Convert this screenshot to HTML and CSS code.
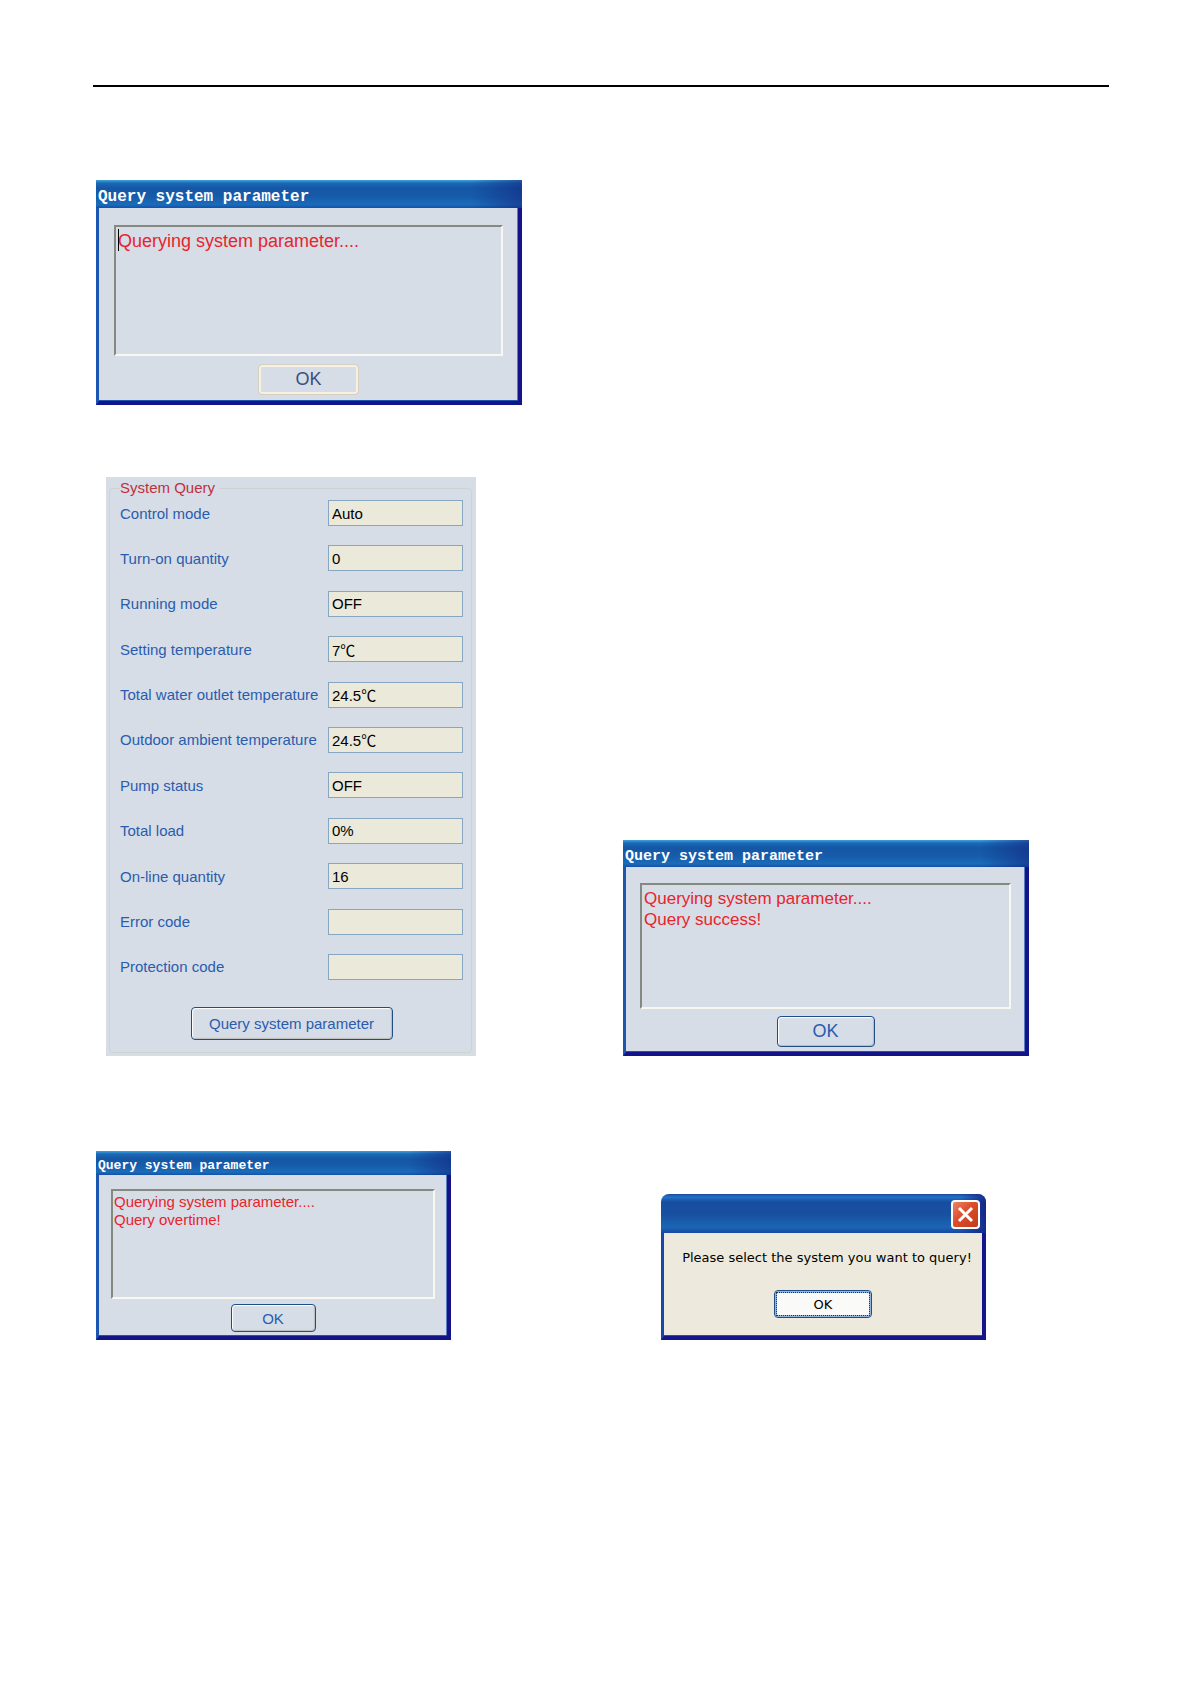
FILE: index.html
```html
<!DOCTYPE html>
<html lang="en">
<head>
  <meta charset="UTF-8">
  <title>Query system parameter</title>
  <link rel="stylesheet" href="styles.css">
</head>
<body>
  <hr class="page-rule">

  <main>
    <!-- query in progress -->
    <div class="row row-first">
      <section class="dialog dialog-large">
        <h2 class="title">Query system parameter</h2>
        <div class="dialog-body">
          <div class="log-wrap caret">
            <textarea class="log" aria-label="Query log" spellcheck="false" readonly>Querying system parameter....</textarea>
          </div>
          <button class="btn btn-hot">OK</button>
        </div>
      </section>
    </div>

    <!-- result panel and success message -->
    <div class="row row-panel">
      <form class="panel">
        <fieldset class="group">
          <legend>System Query</legend>
          <div class="fields">
            <div class="field"><label for="control">Control mode</label><input id="control" type="text" value="Auto" readonly></div>
            <div class="field"><label for="turnon">Turn-on quantity</label><input id="turnon" type="text" value="0" readonly></div>
            <div class="field"><label for="running">Running mode</label><input id="running" type="text" value="OFF" readonly></div>
            <div class="field"><label for="setting">Setting temperature</label><input id="setting" type="text" value="7℃" readonly></div>
            <div class="field"><label for="outlet">Total water outlet temperature</label><input id="outlet" type="text" value="24.5℃" readonly></div>
            <div class="field"><label for="ambient">Outdoor ambient temperature</label><input id="ambient" type="text" value="24.5℃" readonly></div>
            <div class="field"><label for="pump">Pump status</label><input id="pump" type="text" value="OFF" readonly></div>
            <div class="field"><label for="load">Total load</label><input id="load" type="text" value="0%" readonly></div>
            <div class="field"><label for="online">On-line quantity</label><input id="online" type="text" value="16" readonly></div>
            <div class="field"><label for="error">Error code</label><input id="error" type="text" value="" readonly></div>
            <div class="field"><label for="protection">Protection code</label><input id="protection" type="text" value="" readonly></div>
          </div>
          <button class="btn btn-query" type="button">Query system parameter</button>
        </fieldset>
      </form>

      <section class="dialog dialog-medium">
        <h2 class="title">Query system parameter</h2>
        <div class="dialog-body">
          <div class="log-wrap">
            <textarea class="log" aria-label="Query log" spellcheck="false" readonly>Querying system parameter....
Query success!</textarea>
          </div>
          <button class="btn">OK</button>
        </div>
      </section>
    </div>

    <!-- timeout and missing selection -->
    <div class="row row-last">
      <section class="dialog dialog-small">
        <h2 class="title">Query system parameter</h2>
        <div class="dialog-body">
          <div class="log-wrap">
            <textarea class="log" aria-label="Query log" spellcheck="false" readonly>Querying system parameter....
Query overtime!</textarea>
          </div>
          <button class="btn">OK</button>
        </div>
      </section>

      <section class="alert">
        <div class="alert-title">
          <button class="close" aria-label="Close">
            <svg width="19" height="19" viewBox="0 0 19 19">
              <path d="M3 3L16 16M16 3L3 16" stroke="#fff" stroke-width="3" fill="none"/>
            </svg>
          </button>
        </div>
        <div class="alert-body">
          <p>Please select the system you want to query!</p>
          <button class="alert-ok"><span>OK</span></button>
        </div>
      </section>
    </div>
  </main>
</body>
</html>
```
FILE: styles.css
```css
* {
  box-sizing: border-box;
}
body {
  margin: 0;
  padding: 85px 82px 0 93px;
  background-color: #fff;
  font-family: "Liberation Sans", Arial, "Noto Sans CJK SC", sans-serif;
}
.page-rule {
  margin: 0;
  border: none;
  height: 2px;
  background-color: #000;
}

/* rows of windows */
.row {
  display: grid;
  grid-template-columns: 530fr 486fr;
  align-items: end;
}
.row-first {
  margin-top: 93px;
}
.row-panel {
  margin-top: 72px;
}
.row-last {
  margin-top: 95px;
}

/* query dialogs */
.dialog {
  --pad: 14px;
  --line: 21px;
  background: linear-gradient(to right, #1c56ae, #14148a);
}
.dialog-large {
  width: 426px;
  margin-left: 3px;
  --pad: 15px;
  --line: 22px;
  --title: 28px;
  --log: 131px;
  font-size: 18px;
}
.dialog-medium {
  width: 406px;
  --title: 27px;
  --log: 126px;
  font-size: 17px;
}
.dialog-small {
  width: 355px;
  margin-left: 3px;
  --pad: 12px;
  --line: 18px;
  --title: 24px;
  --log: 110px;
  font-size: 15px;
}
.title {
  margin: 0;
  height: var(--title);
  padding: 6px 2px 0;
  overflow: hidden;
  line-height: calc(var(--title) - 6px);
  color: #fff;
  font-family: "Liberation Mono", monospace;
  font-weight: bold;
  font-size: 15px;
  background:
    linear-gradient(to right, rgba(20, 40, 140, 0) 88%, rgba(20, 40, 130, 0.6)),
    linear-gradient(#3fa5d8 0, #1c69b8 3px, #1457a4 8px, #165cab 60%, #1a6cba 88%, #1450a8);
}
.dialog-large .title {
  font-size: 16px;
}
.dialog-small .title {
  font-size: 13px;
}
.dialog-body {
  display: flex;
  flex-direction: column;
  align-items: center;
  gap: 8px;
  padding: calc(var(--pad) + 2px) var(--pad) 6px;
  border: solid #14148a;
  border-width: 0 4px 4px 3px;
  border-left-color: #1c56ae;
  background-color: #d6dde6;
  box-shadow: inset 0 -1px #1c56ae, inset -1px 0 #5c7fc4;
}
.dialog-medium .dialog-body {
  gap: 7px;
  padding-bottom: 5px;
}
.dialog-small .dialog-body {
  gap: 5px;
  padding-bottom: 4px;
}
.log-wrap {
  position: relative;
  width: 100%;
  height: var(--log);
}
.log {
  display: block;
  width: 100%;
  height: 100%;
  padding: 3px 2px;
  border: 2px solid;
  border-color: #85897f #f8f8f0 #f8f8f0 #85897f;
  outline: none;
  resize: none;
  overflow: hidden;
  background-color: transparent;
  color: #e8242c;
  font-family: inherit;
  font-size: inherit;
  line-height: var(--line);
}
.dialog-small .log {
  padding: 2px 1px;
}
.caret::before {
  content: "";
  position: absolute;
  left: 4px;
  top: 4px;
  width: 1px;
  height: 22px;
  background-color: #000;
}

/* buttons */
.btn {
  width: 98px;
  height: 31px;
  padding: 0;
  border: 1px solid #1f4d85;
  border-radius: 4px;
  background-color: #d6dde6;
  box-shadow: inset 1px 1px 1px #fff, inset -1px -1px 1px #b9bcb8;
  color: #2a5cae;
  font-family: inherit;
  font-size: 18px;
}
.btn-hot {
  width: 101px;
  border-color: #d3d0c0;
  box-shadow: inset 0 0 0 2px #f6f1e4;
  color: #3a4f80;
}
.dialog-small .btn {
  width: 85px;
  height: 28px;
  font-size: 15px;
}

/* system query panel */
.panel {
  width: 370px;
  margin-left: 13px;
  padding: 0 4px 3px 3px;
  background-color: #d6dde6;
  color: #2a5cae;
  font-size: 15px;
}
.group {
  display: flex;
  flex-direction: column;
  align-items: center;
  margin: 0;
  padding: 1px 8px 12px 10px;
  border: 1px solid #cfd3cd;
  border-radius: 4px;
}
.group legend {
  padding: 0 4px 0 0;
  color: #c0303c;
  line-height: 22px;
}
.fields {
  display: flex;
  flex-direction: column;
  justify-content: space-between;
  width: 100%;
  height: 480px;
}
.field {
  display: flex;
  align-items: center;
  justify-content: space-between;
}
.field label {
  white-space: nowrap;
}
.field input {
  width: 135px;
  height: 26px;
  padding: 0 3px;
  border: 1px solid #86a6c2;
  outline: none;
  background-color: #ebe9da;
  color: #000;
  font-family: inherit;
  font-size: 15px;
}
.btn-query {
  width: 202px;
  height: 33px;
  margin-top: 27px;
  font-size: 15px;
}

/* alert window */
.alert {
  width: 325px;
  margin-left: 38px;
  border-radius: 8px 8px 0 0;
  overflow: hidden;
}
.alert-title {
  display: flex;
  justify-content: flex-end;
  height: 39px;
  padding: 6px 6px 0;
  background:
    linear-gradient(to right, rgba(20, 40, 140, 0) 92%, rgba(20, 30, 130, 0.8)),
    linear-gradient(#1a4a9e 0, #2272c6 3px, #174e9f 8px, #184f9f 50%, #1a66b4 85%, #1848a0);
}
.close {
  display: flex;
  align-items: center;
  justify-content: center;
  width: 29px;
  height: 29px;
  padding: 0;
  border: 2px solid #fff;
  border-radius: 4px;
  background: linear-gradient(135deg, #ec8668, #dc4c2a 45%, #c03c1c);
}
.alert-body {
  display: flex;
  flex-direction: column;
  align-items: center;
  padding: 14px 10px 18px;
  border: solid #16168c;
  border-width: 0 4px 4px 3px;
  border-left-color: #1a48a8;
  background-color: #edeadd;
  box-shadow: inset 0 -1px #2450b0;
  font-family: "DejaVu Sans", sans-serif;
  font-size: 13px;
}
.alert-body p {
  margin: 0 0 21px;
  padding-left: 8px;
  line-height: 22px;
  white-space: nowrap;
}
.alert-ok {
  width: 98px;
  height: 28px;
  padding: 1px;
  border: 1px solid #1f4d85;
  border-radius: 4px;
  background-color: #fafaf8;
  box-shadow: inset 0 0 0 2px #94b4e0;
  color: #000;
  font-family: inherit;
  font-size: 13px;
}
.alert-ok span {
  display: flex;
  align-items: center;
  justify-content: center;
  height: 100%;
  border: 1px dotted #333;
}
```
